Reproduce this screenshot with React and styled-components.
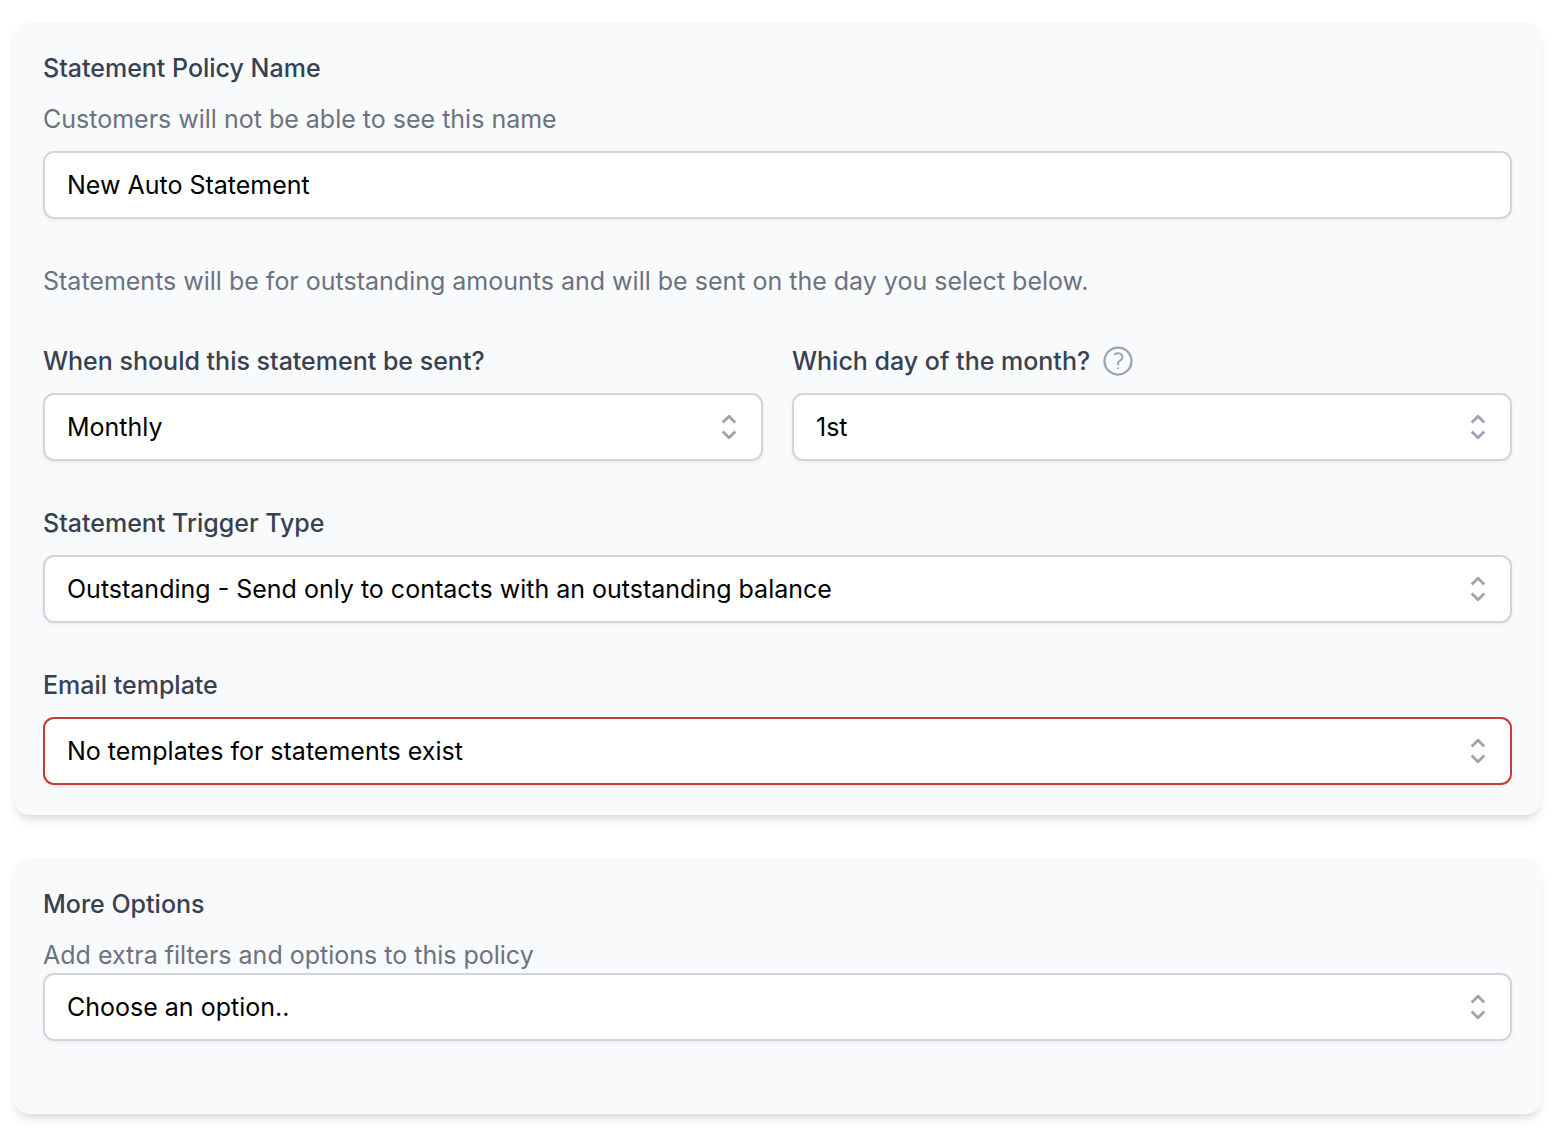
import { useId } from "react";
import styled, { createGlobalStyle } from "styled-components";

const App = () => {
  return (
    <>
      <GlobalStyle />
      <Page>
        <Card>
          <TextField
            label="Statement Policy Name"
            hint="Customers will not be able to see this name"
            value="New Auto Statement"
          />
          <Note>
            Statements will be for outstanding amounts and will be sent on the
            day you select below.
          </Note>
          <Columns>
            <SelectField
              label="When should this statement be sent?"
              options={["Monthly", "Weekly"]}
            />
            <SelectField
              label="Which day of the month?"
              options={["1st", "2nd", "3rd"]}
              help
            />
          </Columns>
          <SelectField
            label="Statement Trigger Type"
            options={[
              "Outstanding - Send only to contacts with an outstanding balance",
            ]}
          />
          <SelectField
            label="Email template"
            options={["No templates for statements exist"]}
            invalid
          />
        </Card>
        <Card $tall>
          <SelectField
            label="More Options"
            hint="Add extra filters and options to this policy"
            options={["Choose an option.."]}
          />
        </Card>
      </Page>
    </>
  );
};

const TextField = ({ label, hint, value }) => {
  const id = useId();
  return (
    <Field>
      <LabelRow $hasHint>
        <Label htmlFor={id}>{label}</Label>
      </LabelRow>
      <Hint $spaced>{hint}</Hint>
      <Input id={id} type="text" defaultValue={value} />
    </Field>
  );
};

const SelectField = ({ label, hint, options, help, invalid }) => {
  const id = useId();
  return (
    <Field>
      <LabelRow $hasHint={Boolean(hint)}>
        <Label htmlFor={id}>{label}</Label>
        {help && <HelpIcon />}
      </LabelRow>
      {hint && <Hint>{hint}</Hint>}
      <SelectBox>
        <Select id={id} $invalid={invalid} aria-invalid={invalid}>
          {options.map((option) => (
            <option key={option}>{option}</option>
          ))}
        </Select>
        <Chevrons />
      </SelectBox>
    </Field>
  );
};

const HelpIcon = () => (
  <HelpButton type="button" aria-label="Help">
    <svg
      width="36"
      height="36"
      viewBox="0 0 24 24"
      fill="none"
      stroke="currentColor"
      strokeLinecap="round"
      strokeLinejoin="round"
    >
      <circle cx="12" cy="12" r="9" strokeWidth="1.5" />
      <path
        strokeWidth="1.3"
        d="M9.879 7.519c1.171-1.025 3.071-1.025 4.242 0 1.172 1.025 1.172 2.687 0 3.712-.203.179-.43.326-.67.442-.745.361-1.45.999-1.45 1.827v.75m0 2.5h.008"
      />
    </svg>
  </HelpButton>
);

const Chevrons = () => (
  <ChevronIcon
    viewBox="0 0 20 20"
    fill="none"
    stroke="currentColor"
    aria-hidden="true"
  >
    <path
      d="M6.5 7.5L10 4l3.5 3.5m0 5L10 16l-3.5-3.5"
      strokeWidth="1.5"
      strokeLinejoin="round"
    />
  </ChevronIcon>
);

const GlobalStyle = createGlobalStyle`
  * {
    box-sizing: border-box;
  }
  body {
    margin: 0;
    background: #ffffff;
    font-family: Inter, "Liberation Sans", sans-serif;
    font-size: 25px;
    line-height: 36px;
  }
  p {
    margin: 0;
  }
`;

const Page = styled.main`
  display: flex;
  flex-direction: column;
  gap: 43px;
  padding: 22px 15px 16px 14px;
`;

const Card = styled.section`
  display: flex;
  flex-direction: column;
  gap: 44px;
  padding: 28px 29px ${(props) => (props.$tall ? "73px" : "30px")};
  border-radius: 15px;
  background: #f9fafb;
  box-shadow: 0 7px 11px -2px rgba(0, 0, 0, 0.1),
    0 4px 7px -4px rgba(0, 0, 0, 0.1);
`;

const Columns = styled.div`
  display: grid;
  grid-template-columns: 1fr 1fr;
  gap: 29px;
`;

const Field = styled.div`
  display: flex;
  flex-direction: column;
`;

const LabelRow = styled.div`
  display: flex;
  align-items: center;
  gap: 10px;
  height: 36px;
  margin-bottom: ${(props) => (props.$hasHint ? "15px" : "14px")};
`;

const Label = styled.label`
  color: #374151;
  font-weight: 500;
`;

const Hint = styled.p`
  color: #6b7280;
  margin-bottom: ${(props) => (props.$spaced ? "14px" : "0")};
`;

const Note = styled.p`
  color: #6b7280;
`;

const Input = styled.input`
  width: 100%;
  height: 68px;
  padding: 0 22px;
  border: 2px solid ${(props) => (props.$invalid ? "#c93a32" : "#d1d5db")};
  border-radius: 11px;
  background: #ffffff;
  color: #000000;
  font: inherit;
  box-shadow: 0 2px 4px rgba(0, 0, 0, 0.05);
`;

const SelectBox = styled.div`
  position: relative;
`;

const Select = styled(Input).attrs({ as: "select", type: undefined })`
  display: block;
  appearance: none;
`;

const ChevronIcon = styled.svg`
  position: absolute;
  top: 50%;
  right: 16px;
  width: 36px;
  height: 36px;
  transform: translateY(-50%);
  color: #9ca3af;
  pointer-events: none;
`;

const HelpButton = styled.button`
  display: flex;
  padding: 0;
  border: 0;
  background: none;
  color: #9ca3af;
  cursor: pointer;
`;

export default App;
